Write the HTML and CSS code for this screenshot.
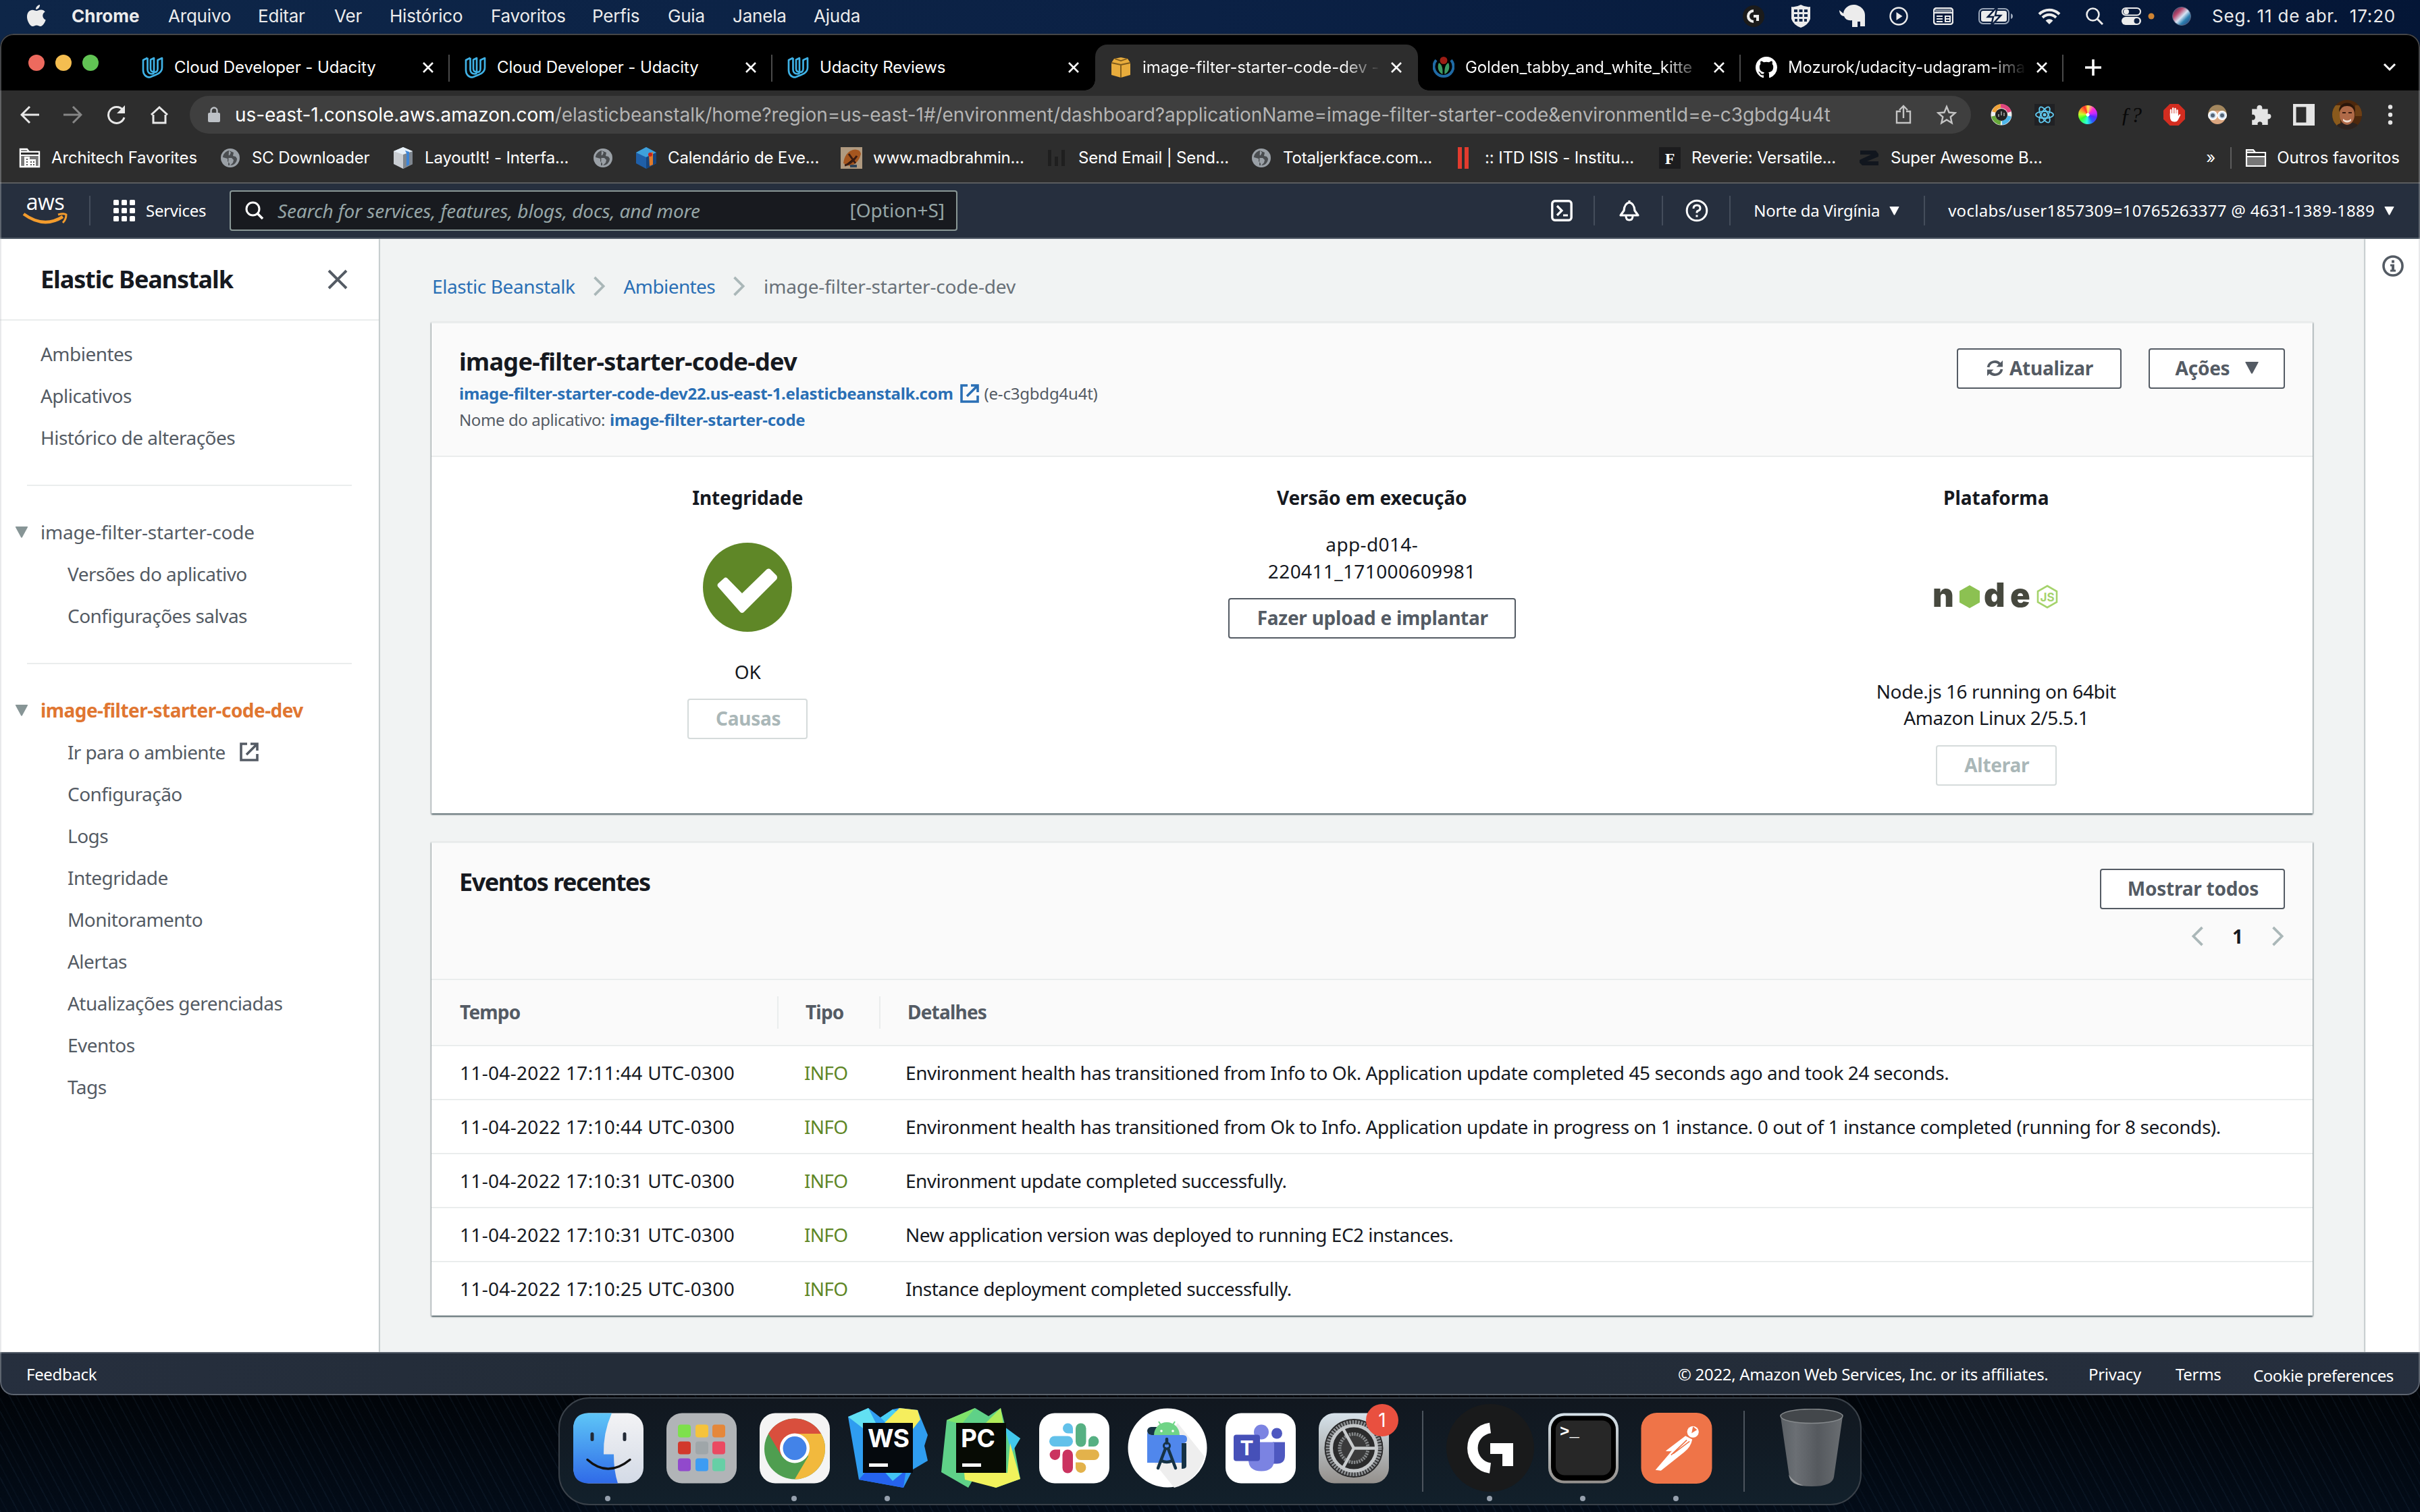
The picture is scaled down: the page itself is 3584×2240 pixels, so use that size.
FILE: index.html
```html
<!DOCTYPE html>
<html lang="pt-BR">
<head>
<meta charset="utf-8">
<title>image-filter-starter-code-dev - Elastic Beanstalk</title>
<link rel="stylesheet" href="styles.css">
</head>
<body>
<svg class="defs" width="0" height="0">
  <symbol id="close" viewBox="0 0 20 20"><path d="M3 3l14 14M17 3L3 17" stroke="currentColor" stroke-width="2.6" fill="none"/></symbol>
  <symbol id="udacity" viewBox="0 0 32 32"><path d="M8.500 1.800L2 5v15c0 6 4 10.500 9.500 10.500C19 27 30 25.500 30 16V2l-6.500 3v13c0 4-2.500 5.500-5.500 4.500M8.500 1.800V19c0 4 2.500 6.500 6.500 6.500 2 0 3-1 3-3V2l-5 2.500V18c0 3 2 4.600 5 4.500" fill="none" stroke="#3fb1e5" stroke-width="2.700" stroke-linejoin="round"/></symbol>
  <symbol id="globe" viewBox="0 0 28 28"><circle cx="14" cy="14" r="14" fill="#9aa0a6"/><path d="M12 3c-5 1-9 6-9 10l7 2v4l3 3v3c-1 0-2 0-2-.2M12 3l3 3-2 4-4 1v3h7l3 3-1 4-4 4c6 0 10-5 10-10l-2-3-4-1 1-5" fill="#4a4d50"/></symbol>
  <symbol id="folder" viewBox="0 0 32 28"><path d="M2 26V2h10l3 4h15v20z" fill="#777" stroke="#fff" stroke-width="2.200"/><path d="M2 6h28v6H2z" fill="#2d2d2d" stroke="#fff" stroke-width="2"/></symbol>
  <symbol id="external" viewBox="0 0 30 30"><path d="M12 3H3v24h24v-9M17 3h10v10M26 4L11 19" fill="none" stroke="currentColor" stroke-width="3.600"/></symbol>
  <symbol id="tri" viewBox="0 0 20 18"><path d="M1 0h18q1 0 .6 1L11 17q-1 1.300-2 0L.4 1Q0 0 1 0z" fill="currentColor"/></symbol>
  <symbol id="chev" viewBox="0 0 20 32"><path d="M2 2l14 14L2 30" fill="none" stroke="#aab7b8" stroke-width="4"/></symbol>
</svg>

<header class="menubar">
  <nav class="menus">
    <svg width="28" height="34" viewBox="0 0 28 34"><path d="M19 0c.3 4-3 7-6 7 0-4 3-6.500 6-7zM14 9c2 0 4-1.700 7-1.500 2.500.1 4.500 1.200 5.700 3-5 3-4.300 9.800 1 12-1.300 4-4.500 9.500-7.700 9.500-2.300 0-3-1.400-5.800-1.400S10.800 32 8.500 32C4.500 32 0 24 0 18 0 11 4 7.700 8 7.700c2.500 0 4.500 1.300 6 1.300z" fill="#ececec"/></svg>
    <b>Chrome</b><span>Arquivo</span><span>Editar</span><span>Ver</span><span>Histórico</span><span>Favoritos</span><span>Perfis</span><span>Guia</span><span>Janela</span><span>Ajuda</span>
  </nav>
  <div class="status">
    <svg viewBox="0 0 32 32" width="32" height="32"><circle cx="16" cy="16" r="16" fill="#1b1b1b"/><path d="M16 8a8 8 0 1 0 0 16M16 16h6v7" fill="none" stroke="#eee" stroke-width="4"/></svg>
    <svg viewBox="0 0 30 34" width="30" height="34"><path d="M1 3q7 1 14-3 7 4 14 3v18q-3 9-14 13Q4 30 1 21z" fill="#ececec"/><path d="M5 7h5v4H5zM12.500 7h5v4h-5zM20 7h5v4h-5zM5 14h5v4H5zM12.500 14h5v4h-5zM20 14h5v4h-5zM6 21h4v4H6zM12.500 21h5v4h-5zM20 21h4v4h-4z" fill="#14284a"/></svg>
    <svg viewBox="0 0 40 34" width="40" height="34"><path d="M1 8l6 5c1-9 9-13 15-13 10 0 18 8 17 17v15h-7v-7h-4v8h-8V23c-6 1-10-1-12-6-4 0-7-4-7-9z" fill="#ececec"/></svg>
    <svg viewBox="0 0 28 28" width="28" height="28"><circle cx="14" cy="14" r="12.500" fill="none" stroke="#ececec" stroke-width="2.400"/><path d="M10.500 8l9 6-9 6z" fill="#ececec"/></svg>
    <svg viewBox="0 0 30 26" width="30" height="26"><rect x="1" y="1" width="28" height="24" rx="4" fill="none" stroke="#ececec" stroke-width="2.400"/><path d="M1 8h28M5 13h9M5 17h9M5 21h9M18 13h7v8h-7zM18 17h7" stroke="#ececec" stroke-width="2" fill="none"/><path d="M3 3h24v4H3z" fill="#ececec" opacity=".5"/></svg>
    <svg viewBox="0 0 52 24" width="52" height="24"><rect x="1" y="1" width="44" height="22" rx="6" fill="none" stroke="#9aa6b8" stroke-width="2"/><rect x="4" y="4" width="38" height="16" rx="3" fill="#ececec"/><path d="M28-2L14 13h8l-3 13 14-15h-8z" fill="#ececec" stroke="#0a1d3f" stroke-width="2.500"/><path d="M48 8v8q3-1 3-4t-3-4z" fill="#9aa6b8"/></svg>
    <svg viewBox="0 0 34 24" width="34" height="24"><path d="M2 9a21 21 0 0 1 30 0M7 14a14 14 0 0 1 20 0" fill="none" stroke="#ececec" stroke-width="4"/><path d="M11.500 18.500a8 8 0 0 1 11 0L17 24z" fill="#ececec"/></svg>
    <svg viewBox="0 0 26 26" width="26" height="26"><circle cx="10.500" cy="10.500" r="9" fill="none" stroke="#ececec" stroke-width="2.600"/><path d="M17 17l8 8" stroke="#ececec" stroke-width="3"/></svg>
    <svg viewBox="0 0 52 26" width="52" height="26"><rect x="1" y="1" width="27" height="10.500" rx="5.200" fill="none" stroke="#ececec" stroke-width="2"/><circle cx="7" cy="6.300" r="4" fill="#ececec"/><rect y="14" width="29" height="12" rx="6" fill="#ececec"/><circle cx="22.500" cy="20" r="4" fill="#0a1d3f"/><circle cx="44" cy="13" r="4.500" fill="#cf8433"/></svg>
    <svg viewBox="0 0 30 30" width="30" height="30"><defs><linearGradient id="siri" x1="0" y1="0" x2="1" y2="1"><stop offset="0" stop-color="#1c2b50"/><stop offset=".3" stop-color="#b9476c"/><stop offset=".52" stop-color="#d5e4f5"/><stop offset=".7" stop-color="#2c7fb0"/><stop offset="1" stop-color="#2a2c6c"/></linearGradient></defs><circle cx="15" cy="15" r="13.500" fill="url(#siri)" stroke="#5b6a86"/></svg>
    <span class="clock">Seg. 11 de abr.&nbsp; 17:20</span>
  </div>
</header>

<section class="window">
  <div class="tabstrip">
    <div class="lights"><i class="red"></i><i class="yellow"></i><i class="green"></i></div>
    <div class="tab"><svg width="32" height="32"><use href="#udacity"/></svg><span>Cloud Developer - Udacity</span><svg class="x"><use href="#close"/></svg></div>
    <div class="tab"><svg width="32" height="32"><use href="#udacity"/></svg><span>Cloud Developer - Udacity</span><svg class="x"><use href="#close"/></svg></div>
    <div class="tab plain"><svg width="32" height="32"><use href="#udacity"/></svg><span>Udacity Reviews</span><svg class="x"><use href="#close"/></svg></div>
    <div class="tab active"><svg width="32" height="32" viewBox="0 0 32 32"><path d="M2 9l4-6 10-2 10 2 4 6v18l-14 4L2 27z" fill="#e8ac3c"/><path d="M2 9l14 3 14-3M16 12v19M7 3l9 3 9-3" stroke="#7d5a1c" stroke-width="1.800" fill="none"/></svg><span class="fade">image-filter-starter-code-dev -</span><svg class="x"><use href="#close"/></svg></div>
    <div class="tab"><svg width="32" height="32" viewBox="0 0 32 32"><path d="M5 5a14.500 14.500 0 1 0 22 0" fill="none" stroke="#1f6aa5" stroke-width="4"/><circle cx="16" cy="5.500" r="5.500" fill="#9c1c14"/><path d="M14.500 26C8 23 6 15 9 9c5 3 6 9 5.500 17zM17.500 26c6.500-3 8.500-11 5.500-17-5 3-6 9-5.500 17z" fill="#3c9a63"/></svg><span class="fade">Golden_tabby_and_white_kitte</span><svg class="x"><use href="#close"/></svg></div>
    <div class="tab"><svg width="32" height="32" viewBox="0 0 16 16"><path fill="#fff" d="M8 0C3.580 0 0 3.580 0 8c0 3.540 2.290 6.530 5.470 7.590.4.070.55-.17.55-.38 0-.19-.01-.82-.01-1.490-2.010.37-2.530-.49-2.690-.94-.09-.23-.48-.94-.82-1.130-.28-.15-.68-.52-.01-.53.63-.01 1.080.58 1.230.82.72 1.210 1.870.87 2.330.66.07-.52.28-.87.51-1.070-1.780-.2-3.640-.89-3.640-3.950 0-.87.31-1.590.82-2.150-.08-.2-.36-1.020.08-2.120 0 0 .67-.21 2.200.82.64-.18 1.320-.27 2-.27s1.360.09 2 .27c1.530-1.040 2.200-.82 2.200-.82.44 1.100.16 1.920.08 2.120.51.56.82 1.270.82 2.150 0 3.070-1.870 3.750-3.650 3.950.29.25.54.73.54 1.480 0 1.070-.01 1.930-.01 2.200 0 .21.15.46.55.38A8.010 8.010 0 0 0 16 8c0-4.420-3.580-8-8-8z"/></svg><span class="fade">Mozurok/udacity-udagram-ima</span><svg class="x"><use href="#close"/></svg></div>
    <svg class="newtab" width="26" height="26" viewBox="0 0 26 26"><path d="M13 1v24M1 13h24" stroke="#fff" stroke-width="3.600"/></svg>
    <svg class="tabmenu" width="20" height="14" viewBox="0 0 20 14"><path d="M2 2l8 8 8-8" stroke="#fff" stroke-width="3" fill="none"/></svg>
  </div>

  <div class="toolbar">
    <div class="navicons">
      <svg viewBox="0 0 28 28"><path d="M28 14H3M14 2L2 14l12 12" stroke="#e8e8e8" stroke-width="3" fill="none"/></svg>
      <svg viewBox="0 0 28 28"><path d="M0 14h25M14 2l12 12-12 12" stroke="#868686" stroke-width="3" fill="none"/></svg>
      <svg viewBox="0 0 28 28"><path d="M24 7A12 12 0 1 0 26 18" stroke="#e8e8e8" stroke-width="3" fill="none"/><path d="M27 0v12H15z" fill="#e8e8e8"/></svg>
      <svg viewBox="0 0 28 28"><path d="M5 14v12h18V14M2 14L14 3l12 11" stroke="#e8e8e8" stroke-width="3" fill="none"/></svg>
    </div>
    <div class="omnibox">
      <svg width="18" height="24" viewBox="0 0 18 24"><rect y="9" width="18" height="14" rx="2" fill="#bdc1c6"/><path d="M4.500 10V6a4.500 4.500 0 0 1 9 0v4" fill="none" stroke="#bdc1c6" stroke-width="2.400"/></svg>
      <span class="url"><b>us-east-1.console.aws.amazon.com</b>/elasticbeanstalk/home?region=us-east-1#/environment/dashboard?applicationName=image-filter-starter-code&amp;environmentId=e-c3gbdg4u4t</span>
      <svg class="share" width="24" height="30" viewBox="0 0 24 30"><path d="M8 10H2v17h20V10h-6M12 20V3M6 8l6-6 6 6" stroke="#c4c4c4" stroke-width="2.400" fill="none"/></svg>
      <svg class="star" width="30" height="30" viewBox="0 0 30 30"><path d="M15 3l3.500 8.500 9 .8-6.800 6 2 9L15 22.500l-7.700 4.800 2-9-6.800-6 9-.8z" stroke="#c4c4c4" stroke-width="2.400" fill="none"/></svg>
    </div>
    <div class="exts">
      <svg viewBox="0 0 32 32"><circle cx="16" cy="16" r="12" fill="none" stroke="#eee" stroke-width="7"/><path d="M5 12A12 12 0 0 1 15 3" stroke="#f0a33a" stroke-width="6" fill="none"/><path d="M15 3a13 13 0 0 1 13 9" stroke="#e0457d" stroke-width="6" fill="none"/><path d="M28 18a13 13 0 0 1-11 10" stroke="#4db6ea" stroke-width="6" fill="none"/><path d="M15 28A13 13 0 0 1 4 18" stroke="#67a83a" stroke-width="6" fill="none"/><circle cx="16" cy="16" r="9" fill="#222"/><path d="M16 11v6M12 15v4M20 13v5" stroke="#eee"/></svg>
      <svg viewBox="0 0 32 32"><path d="M1 0h30v32H1z" fill="#202124"/><g fill="none" stroke="#61c9ef" stroke-width="1.800"><ellipse cx="16" cy="16" rx="13" ry="5"/><ellipse cx="16" cy="16" rx="13" ry="5" transform="rotate(60 16 16)"/><ellipse cx="16" cy="16" rx="13" ry="5" transform="rotate(120 16 16)"/></g><circle cx="16" cy="16" r="2.500" fill="#61c9ef"/></svg>
      <i class="wheel"></i>
      <span class="fq">ƒ?</span>
      <svg viewBox="0 0 32 32"><path d="M9.500 0h13L32 9.500v13L22.500 32h-13L0 22.500v-13z" fill="#d32d20"/><path d="M11 17V9M14.200 16V6.500M17.500 16V7M20.500 17V9.500" stroke="#fff" stroke-width="2.400" stroke-linecap="round"/><path d="M9.800 14h12v4l2.200-3 1.500 1-3.500 7q-1.500 3.500-5.500 3.500-6.700 0-6.700-7.500z" fill="#fff"/></svg>
      <svg viewBox="0 0 32 32"><ellipse cx="16" cy="16" rx="13" ry="14" fill="#dba67f"/><path d="M2 17C2-4 30-4 30 17l-7-7H9z" fill="#a3875e"/><circle cx="9" cy="17" r="6" fill="#cde" stroke="#fff" stroke-width="2"/><circle cx="23" cy="17" r="6" fill="#cde" stroke="#fff" stroke-width="2"/><circle cx="9" cy="17" r="3" fill="#567"/><circle cx="23" cy="17" r="3" fill="#567"/></svg>
      <svg viewBox="0 0 30 30"><path d="M3 7h7c-2-7 9-7 7 0h8v7c6-2 6 8 0 7v8h-8c2-6-8-6-6 0H3v-7c6 2 6-9 0-7z" fill="#e4e4e4"/></svg>
      <svg viewBox="0 0 28 28"><path d="M2 2h24v24H2z" fill="none" stroke="#e4e4e4" stroke-width="4"/><path d="M17 2h9v24h-9z" fill="#e4e4e4"/></svg>
      <svg class="avatar" viewBox="0 0 44 44"><defs><clipPath id="av"><circle cx="22" cy="22" r="22"/></clipPath></defs><g clip-path="url(#av)"><path d="M0 0h44v44H0z" fill="#4d280d"/><path d="M0 8h12v30H0z" fill="#8a5a1c"/><path d="M34 8h10v16H34z" fill="#6e4016"/><path d="M4 44q2-12 18-10 16-3 20 10z" fill="#2c2320"/><ellipse cx="22" cy="22" rx="11" ry="15" fill="#b06a48"/><path d="M10 18C9 0 35 0 34 18q-3-9-12-9t-12 9z" fill="#2a160b"/><path d="M16 28q6 5 12 0v3q-6 5-12 0z" fill="#f1ddd0"/><path d="M15 19h5M24 19h5" stroke="#3a1c10" stroke-width="2"/></g></svg>
      <svg viewBox="0 0 28 28"><circle cx="14" cy="4" r="2.800" fill="#e4e4e4"/><circle cx="14" cy="14" r="2.800" fill="#e4e4e4"/><circle cx="14" cy="24" r="2.800" fill="#e4e4e4"/></svg>
    </div>
  </div>

  <div class="bookmarks">
    <div class="bm"><svg viewBox="0 0 32 32"><path d="M2 29V3h10l3 4h15v22z" fill="#777" stroke="#fff" stroke-width="2.400"/><path d="M2 7h28v5H2z" fill="#2d2d2d" stroke="#fff" stroke-width="2"/><path d="M8 14h8v4h9v11H8z" fill="#fff"/><path d="M11 18h2M11 22h2M11 26h2M17 22h2M21 22h2M17 26h2M21 26h2" stroke="#555" stroke-width="2"/></svg><span>Architech Favorites</span></div>
    <div class="bm"><svg viewBox="-2 -2 32 32"><use href="#globe" width="28" height="28"/></svg><span>SC Downloader</span></div>
    <div class="bm"><svg viewBox="0 0 32 32"><path d="M2 6l14-6 14 6v19l-14 7L2 25z" fill="#c9cdd2"/><path d="M16 10l14-4v19l-14 7z" fill="#7e868f"/><path d="M2 6l14-6 14 6-14 5z" fill="#e7f0f8"/><path d="M19 5l6 2v19l-4 2V9z" fill="#3d85d6"/></svg><span>LayoutIt! - Interfa...</span></div>
    <div class="bm"><svg viewBox="-2 -2 32 32"><use href="#globe" width="28" height="28"/></svg></div>
    <div class="bm"><svg viewBox="0 0 32 32"><path d="M1 8L16 0l15 8v16l-15 8L1 24z" fill="#1f5fa8"/><path d="M1 8l15 7 15-7L16 0z" fill="#3fa0da"/><path d="M16 15l15-7v16l-15 8z" fill="#17457e"/><path d="M20 10l6-3v19l-5 2z" fill="#e07b2a"/><circle cx="22" cy="11" r="3" fill="#c8231c"/></svg><span>Calendário de Eve...</span></div>
    <div class="bm"><svg viewBox="0 0 32 32"><path d="M0 0h32v32H0z" fill="#b09a80"/><path d="M4 24Q6 8 18 4q10-2 12 6-3 14-16 18z" fill="#a5561f"/><path d="M6 27q10-2 18-14M12 10l10 14" stroke="#3a1c12" stroke-width="3"/><path d="M14 26h10v4H14z" fill="#2d4358"/></svg><span>www.madbrahmin...</span></div>
    <div class="bm"><svg viewBox="0 0 32 32"><path d="M3 4h5v24H3zM13 14h5v14h-5zM23 4h5v24h-5z" fill="#1f1f1f"/></svg><span>Send Email | Send...</span></div>
    <div class="bm"><svg viewBox="-2 -2 32 32"><use href="#globe" width="28" height="28"/></svg><span>Totaljerkface.com...</span></div>
    <div class="bm"><svg viewBox="0 0 32 32"><path d="M8 0h6v32H8zM18 0h6v32h-6z" fill="#e23b2e"/></svg><span>:: ITD ISIS - Institu...</span></div>
    <div class="bm"><svg viewBox="0 0 32 32"><path d="M0 0h32v32H0z" fill="#1c1c1e"/><text x="16" y="25" text-anchor="middle" class="t-f">F</text></svg><span>Reverie: Versatile...</span></div>
    <div class="bm"><svg viewBox="0 0 32 32"><path d="M3 5h23l4 5v4l-17 7h17v6H6l-4-4v-4l17-8H3z" fill="#11161e"/></svg><span>Super Awesome B...</span></div>
    <div class="bm-end"><span class="more">»</span><i></i><svg width="32" height="28"><use href="#folder"/></svg><span>Outros favoritos</span></div>
  </div>

  <div class="awsnav">
    <svg class="awslogo" width="66" height="42" viewBox="0 0 66 42"><text x="33" y="20" text-anchor="middle" class="t-aws">aws</text><path d="M1 26q30 22 58 4" fill="none" stroke="#f39c2d" stroke-width="4.500"/><path d="M52 27q9-2.500 12 0 0 7-5 12" fill="none" stroke="#f39c2d" stroke-width="3"/></svg>
    <i class="sep s1"></i>
    <svg width="32" height="32" viewBox="0 0 32 32" fill="#fff"><rect width="8" height="8" rx="1.500"/><rect x="12" width="8" height="8" rx="1.500"/><rect x="24" width="8" height="8" rx="1.500"/><rect y="12" width="8" height="8" rx="1.500"/><rect x="12" y="12" width="8" height="8" rx="1.500"/><rect x="24" y="12" width="8" height="8" rx="1.500"/><rect y="24" width="8" height="8" rx="1.500"/><rect x="12" y="24" width="8" height="8" rx="1.500"/><rect x="24" y="24" width="8" height="8" rx="1.500"/></svg>
    <span class="services">Services</span>
    <div class="search"><svg width="28" height="28" viewBox="0 0 28 28"><circle cx="11.500" cy="11.500" r="9.500" fill="none" stroke="#fff" stroke-width="3"/><path d="M18 18l8 8" stroke="#fff" stroke-width="3.600"/></svg><em>Search for services, features, blogs, docs, and more</em><span>[Option+S]</span></div>
    <div class="awsright">
      <div class="cell c-shell"><svg width="32" height="32" viewBox="0 0 32 32"><rect x="1.800" y="1.800" width="28.400" height="28.400" rx="4" fill="none" stroke="#fff" stroke-width="3.400"/><path d="M9 9l7 7-7 7M18 23h7" stroke="#fff" stroke-width="3.200" fill="none"/></svg></div>
      <div class="cell c-bell"><svg width="34" height="34" viewBox="0 0 34 34"><path d="M17 2v3M4 24h26l-5-7q-1-11-8-12-7 1-8 12z" fill="none" stroke="#fff" stroke-width="3.200" stroke-linejoin="round"/><path d="M12 25q0 6 5 6t5-6" fill="none" stroke="#fff" stroke-width="3"/></svg></div>
      <div class="cell c-help"><svg width="34" height="34" viewBox="0 0 34 34"><circle cx="17" cy="17" r="14.800" fill="none" stroke="#fff" stroke-width="3"/><path d="M12 14q0-5 5-5t5 4.500q0 3-3.500 4-1.500.5-1.500 3M17 23.500v3" stroke="#fff" stroke-width="3" fill="none"/></svg></div>
      <div class="cell c-region"><span>Norte da Virgínia</span><svg width="15" height="13"><use href="#tri"/></svg></div>
      <div class="c-user"><span>voclabs/user1857309=10765263377 @ 4631-1389-1889</span><svg width="15" height="13"><use href="#tri"/></svg></div>
    </div>
  </div>

  <div class="content">
    <aside class="sidebar">
      <div class="side-head"><h2>Elastic Beanstalk</h2><svg width="30" height="30" viewBox="0 0 30 30"><path d="M2 2l26 26M28 2L2 28" stroke="#545b64" stroke-width="4"/></svg></div>
      <ul class="top">
        <li>Ambientes</li><li>Aplicativos</li><li>Histórico de alterações</li>
      </ul>
      <hr>
      <ul>
        <li class="group"><svg width="20" height="17"><use href="#tri"/></svg>image-filter-starter-code</li>
        <li class="sub">Versões do aplicativo</li><li class="sub">Configurações salvas</li>
      </ul>
      <hr>
      <ul>
        <li class="group current"><svg width="20" height="17"><use href="#tri"/></svg><b>image-filter-starter-code-dev</b></li>
        <li class="sub go">Ir para o ambiente<svg class="ext" width="30" height="30"><use href="#external"/></svg></li>
        <li class="sub">Configuração</li><li class="sub">Logs</li><li class="sub">Integridade</li><li class="sub">Monitoramento</li><li class="sub">Alertas</li><li class="sub">Atualizações gerenciadas</li><li class="sub">Eventos</li><li class="sub">Tags</li>
      </ul>
    </aside>

    <main>
      <nav class="crumbs"><a>Elastic Beanstalk</a><svg width="20" height="30"><use href="#chev"/></svg><a class="c2">Ambientes</a><svg width="20" height="30"><use href="#chev"/></svg><span>image-filter-starter-code-dev</span></nav>

      <section class="card">
        <header class="env-head">
          <div class="env-title">
            <h1>image-filter-starter-code-dev</h1>
            <p><a class="host">image-filter-starter-code-dev22.us-east-1.elasticbeanstalk.com</a><svg width="30" height="30"><use href="#external"/></svg><span>(e-c3gbdg4u4t)</span></p>
            <p><span class="appname">Nome do aplicativo:</span><a>image-filter-starter-code</a></p>
          </div>
          <div class="actions">
            <button class="btn refresh"><svg width="25" height="25" viewBox="0 0 25 25"><path d="M2.500 11A10 10 0 0 1 20 6.500M22.500 14A10 10 0 0 1 5 18.500" fill="none" stroke="#545b64" stroke-width="3.800"/><path d="M24 1v9.500h-9.500zM1 24v-9.500h9.500z" fill="#545b64"/></svg>Atualizar</button>
            <button class="btn acts">Ações<svg width="22" height="18"><use href="#tri"/></svg></button>
          </div>
        </header>
        <div class="overview">
          <div class="col">
            <h3>Integridade</h3>
            <svg class="ok" width="132" height="132" viewBox="0 0 132 132"><circle cx="66" cy="66" r="66" fill="#5f8727"/><path d="M22.500 65.500q-2-2.500 0-5l9-8q2-2 4.500 0L58 75l36.500-35.500q3-2 5.500 0l9 9q2 3 0 6L60.500 103q-2.500 2-5 0z" fill="#fff"/></svg>
            <p class="oktext">OK</p>
            <button class="btn off w-causas">Causas</button>
          </div>
          <div class="col">
            <h3>Versão em execução</h3>
            <p class="version">app-d014-<br>220411_171000609981</p>
            <button class="btn w-deploy">Fazer upload e implantar</button>
          </div>
          <div class="col">
            <h3 class="plat">Plataforma</h3>
            <svg class="node" width="184" height="60" viewBox="0 0 184 60"><g class="t-node"><text x="-2" y="53">n</text><text x="74" y="53">d</text><text x="113" y="53">e</text></g><path d="M53 21l15 8.500v17L53 55l-15-8.500v-17z" fill="#8cc152"/><path d="M168 22l14 8v16l-14 8-14-8V30z" fill="#fff" stroke="#a5d36c" stroke-width="2.600"/><text x="168" y="45" text-anchor="middle" class="t-js">JS</text></svg>
            <p class="platform">Node.js 16 running on 64bit<br>Amazon Linux 2/5.5.1</p>
            <button class="btn off w-alterar">Alterar</button>
          </div>
        </div>
      </section>

      <section class="card events">
        <header class="ev-head">
          <h2>Eventos recentes</h2>
          <div class="ev-tools">
            <button class="btn w-all">Mostrar todos</button>
            <div class="pager"><svg class="prev" width="20" height="30"><use href="#chev"/></svg><b>1</b><svg width="20" height="30"><use href="#chev"/></svg></div>
          </div>
        </header>
        <div class="row th"><b>Tempo</b><b>Tipo</b><b>Detalhes</b></div>
        <div class="row"><time>11-04-2022 17:11:44 UTC-0300</time><i>INFO</i><span>Environment health has transitioned from Info to Ok. Application update completed 45 seconds ago and took 24 seconds.</span></div>
        <div class="row"><time>11-04-2022 17:10:44 UTC-0300</time><i>INFO</i><span>Environment health has transitioned from Ok to Info. Application update in progress on 1 instance. 0 out of 1 instance completed (running for 8 seconds).</span></div>
        <div class="row"><time>11-04-2022 17:10:31 UTC-0300</time><i>INFO</i><span class="short">Environment update completed successfully.</span></div>
        <div class="row"><time>11-04-2022 17:10:31 UTC-0300</time><i>INFO</i><span class="short">New application version was deployed to running EC2 instances.</span></div>
        <div class="row"><time>11-04-2022 17:10:25 UTC-0300</time><i>INFO</i><span class="short">Instance deployment completed successfully.</span></div>
      </section>
    </main>

    <aside class="infobar"><svg width="32" height="32" viewBox="0 0 32 32"><circle cx="16" cy="16" r="14" fill="none" stroke="#545b64" stroke-width="3.600"/><path d="M14 7.500h4v4h-4zM12 13.500h6v8h2v3h-8v-3h2v-5h-2z" fill="#545b64"/></svg></aside>
  </div>

  <footer class="awsfoot"><span>Feedback</span><span class="copy">© 2022, Amazon Web Services, Inc. or its affiliates.</span><span class="priv">Privacy</span><span class="terms">Terms</span><span class="cookie">Cookie preferences</span></footer>
</section>

<div class="dock">
  <div class="app run"><svg width="104" height="105" viewBox="0 0 104 104"><defs><linearGradient id="fb" x1="0" y1="0" x2="0" y2="1"><stop offset="0" stop-color="#5ec6f7"/><stop offset="1" stop-color="#2f6ae8"/></linearGradient><linearGradient id="fw" x1="0" y1="0" x2="0" y2="1"><stop offset="0" stop-color="#f3f3f5"/><stop offset="1" stop-color="#d3dae6"/></linearGradient></defs><rect width="104" height="104" rx="23" fill="url(#fw)"/><path d="M57 0H23Q0 0 0 23v58q0 23 23 23h43q-6-18-6-43H45Q44 30 57 0z" fill="url(#fb)"/><path d="M28 31v8M76 31v8" stroke="#222a36" stroke-width="5" stroke-linecap="round"/><path d="M21 69q30 27 63 0" fill="none" stroke="#111" stroke-width="3.500" stroke-linecap="round"/></svg></div>
  <div class="app"><svg width="104" height="105" viewBox="0 0 104 104"><rect width="104" height="104" rx="23" fill="#b1b4b7"/><g><rect x="17" y="17" width="19" height="19" rx="4" fill="#7ee04c"/><rect x="43" y="17" width="19" height="19" rx="4" fill="#f5c33c"/><rect x="68" y="17" width="19" height="19" rx="4" fill="#e5873a"/><rect x="17" y="42" width="19" height="19" rx="4" fill="#d2382b"/><rect x="43" y="42" width="19" height="19" rx="4" fill="#9fa6a9"/><rect x="68" y="42" width="19" height="19" rx="4" fill="#ea4a62"/><rect x="17" y="67" width="19" height="19" rx="4" fill="#9149cc"/><rect x="43" y="67" width="19" height="19" rx="4" fill="#3d9cf3"/><rect x="68" y="67" width="19" height="19" rx="4" fill="#66cfa6"/></g></svg></div>
  <div class="app run"><svg width="104" height="105" viewBox="0 0 104 104"><rect width="104" height="104" rx="23" fill="#f4f4f4"/><circle cx="52" cy="53" r="45" fill="#4f9e50"/><path d="M52 8a45 45 0 0 1 39 22.500H52L33 64 13 30.500A45 45 0 0 1 52 8z" fill="#d94f3d"/><path d="M91 30.500A45 45 0 0 1 52 98l20-34-20-33.500z" fill="#f2b93d"/><circle cx="52" cy="52" r="22" fill="#fff"/><circle cx="52" cy="52" r="17.500" fill="#4383e8"/></svg></div>
  <div class="app run"><svg width="118" height="118" viewBox="0 0 118 118"><path d="M0 13L30 0l18 14L66 2l10-2 27 3 15 37-5 16 5 22-22 13-14 27-66-12z" fill="#2f9df0"/><path d="M0 13L30 0l12 24-20 6z" fill="#62e0f2"/><path d="M48 14L66 2l8 4-16 18z" fill="#4bd0f4"/><path d="M54 22L76 0l27 3 4 14-11 14-10-9z" fill="#f6ee5d"/><path d="M16 106l66 12 4-28H30z" fill="#2563ee"/><path d="M50 90l16 18 22-18z" fill="#42c4f5"/><rect x="22" y="22" width="74" height="74" fill="#05090d"/><text x="29" y="58" class="t-ide">WS</text><path d="M31 82h28v5H31z" fill="#fff"/></svg></div>
  <div class="app"><svg width="118" height="118" viewBox="0 0 118 118"><path d="M8 18L50 0l20 12L88 0l8 32 21 13-9 12 9 48-36 13-34-12-7 12-40-23z" fill="#5fd188"/><path d="M64 24L88 0l4 26z" fill="#b0ec5a"/><path d="M8 18l42-18-20 24z" fill="#7fe36a"/><path d="M94 28l23 17-13 22z" fill="#41c8ec"/><path d="M34 96h64l4-44 15 53-36 13-46-12z" fill="#f1f25c"/><rect x="22" y="22" width="74" height="74" fill="#070b04"/><text x="29" y="58" class="t-ide">PC</text><path d="M31 82h28v5H31z" fill="#fff"/></svg></div>
  <div class="app"><svg width="104" height="105" viewBox="0 0 104 104"><rect width="104" height="104" rx="23" fill="#fff"/><g fill="#62c1ea"><path d="M42.500 15a7.500 7.500 0 0 1 7.500 7.500V30h-7.500a7.500 7.500 0 0 1 0-15z"/><rect x="15" y="34" width="35" height="15.500" rx="7.700"/></g><g fill="#56b083"><rect x="54" y="15" width="15.500" height="35" rx="7.700"/><path d="M73 49.500V42a7.700 7.700 0 1 1 7.700 7.500z"/></g><g fill="#cb3360"><path d="M31 54v7.500A7.700 7.700 0 1 1 23 54z"/><rect x="34.500" y="54" width="15.500" height="35" rx="7.700"/></g><g fill="#e3b24b"><rect x="54" y="54" width="35" height="15.500" rx="7.700"/><path d="M54 73h7.500a7.700 7.700 0 1 1-7.500 8z"/></g></svg></div>
  <div class="app"><svg width="118" height="118" viewBox="0 0 118 118"><circle cx="59" cy="59" r="58.500" fill="#fff"/><path d="M74 22l40 50q-12 38-45 46L40 82z" fill="#eee"/><rect x="29" y="28" width="20" height="12" rx="6" fill="#163245"/><path d="M39 40a19 19 0 0 1 38 0z" fill="#70d487"/><path d="M46 20l5 8M70 20l-5 8" stroke="#70d487" stroke-width="2"/><circle cx="50" cy="34" r="1.800" fill="#fff"/><circle cx="67" cy="34" r="1.800" fill="#fff"/><path d="M29 34q0 6 8 6h45q6 0 6 6t-6 6v29H29z" fill="#5087ec"/><path d="M80 52h7v34q0 4-7 4z" fill="#163245"/><circle cx="58" cy="56" r="4.500" fill="none" stroke="#163245" stroke-width="3"/><path d="M58 46v6M56 60L45 89M60 60l11 29M50 78q8 4 16 0" fill="none" stroke="#163245" stroke-width="4.500" stroke-linecap="round"/></svg></div>
  <div class="app"><svg width="104" height="105" viewBox="0 0 104 104"><rect width="104" height="104" rx="23" fill="#fff"/><circle cx="76" cy="30" r="8" fill="#4e58c0"/><path d="M70 43h18v20q0 12-12 12h-6z" fill="#4e58c0"/><circle cx="53" cy="28" r="11" fill="#7b83e2"/><path d="M34 43h38v26q0 17-19 17T34 69z" fill="#7b83e2"/><rect x="12" y="32" width="39" height="39" rx="4" fill="#4650b8"/><text x="31.500" y="62" text-anchor="middle" class="t-teams">T</text></svg></div>
  <div class="app"><svg width="104" height="105" viewBox="0 0 104 104"><defs><linearGradient id="sg" x1="0" y1="0" x2="0" y2="1"><stop offset="0" stop-color="#d6e2ea"/><stop offset="1" stop-color="#94908c"/></linearGradient></defs><rect width="104" height="104" rx="23" fill="url(#sg)"/><circle cx="52" cy="52" r="43.500" fill="#2b2b2c"/><circle cx="52" cy="52" r="38" fill="none" stroke="#8e9194" stroke-width="7" stroke-dasharray="2.600 1.600"/><circle cx="52" cy="52" r="33.500" fill="none" stroke="#c3c6c8" stroke-width="5"/><circle cx="52" cy="52" r="21" fill="#3a3a3b" stroke="#85888a" stroke-width="5" stroke-dasharray="2.400 1.400"/><path d="M52 52h33M52 52L36 23M52 52L36 81" stroke="#c8cbcd" stroke-width="4.500"/></svg><span class="badge">1</span></div>
  <i class="dsep"></i>
  <div class="app run"><svg width="130" height="130" viewBox="0 0 130 130"><circle cx="65" cy="65" r="65" fill="#191a1b"/><path d="M65 35.500a30 30 0 0 0 0 59.500" fill="none" stroke="#fff" stroke-width="15.500"/><path d="M65 58h34v34H83V74H65z" fill="#fff"/></svg></div>
  <div class="app run"><svg width="104" height="105" viewBox="0 0 104 104"><rect width="104" height="104" rx="23" fill="url(#sg)"/><rect x="4" y="4" width="96" height="96" rx="20" fill="#000"/><rect x="11" y="11" width="82" height="81" rx="13" fill="#272727"/><text x="17" y="34" class="t-term">&gt;_</text></svg></div>
  <div class="app run"><svg width="106" height="105" viewBox="0 0 104 104"><rect width="104" height="104" rx="23" fill="#ef7448"/><circle cx="76" cy="28" r="8.500" fill="#fff"/><path d="M76 20l6 5-8 5z" fill="#ef7448"/><path d="M65 34l10 5q-2 11-12 19L29 85l-8-1 24-28q-4 1-9 0z" fill="#fff"/><path d="M67 40L44 62M71 42L47 60" stroke="#ef7448" stroke-width="1.600"/></svg></div>
  <i class="dsep"></i>
  <div class="app"><svg width="94" height="116" viewBox="0 0 94 116"><defs><linearGradient id="tg" x1="0" y1="0" x2="1" y2="0"><stop offset="0" stop-color="#5b6065"/><stop offset=".25" stop-color="#6b6f74"/><stop offset=".6" stop-color="#55595e"/><stop offset="1" stop-color="#6a6e72"/></linearGradient></defs><path d="M1 11l13 90q2 14 33 14t33-14l13-90z" fill="url(#tg)"/><ellipse cx="47" cy="11" rx="46" ry="10.500" fill="#43474b" stroke="#85898c" stroke-width="1.500"/><path d="M13 98q4 15 22 16-14-5-22-16z" fill="#96999b"/></svg></div>
</div>
</body>
</html>
```
FILE: styles.css
```css
* { box-sizing: border-box; }
html, body { margin: 0; height: 100%; }
body {
  width: 3584px; height: 2240px; overflow: hidden;
  display: flex; flex-direction: column;
  background:
    linear-gradient(90deg, #0e2648 0, #0b2145 50%, #041636 100%) 0 0 / 100% 200px no-repeat,
    repeating-linear-gradient(62deg, rgba(70,110,150,.09) 0 2px, transparent 2px 9px, rgba(70,110,150,.05) 9px 11px, transparent 11px 23px),
    linear-gradient(transparent 2060px, #030c18 2240px),
    #010408;
  font-family: "Noto Sans", "Open Sans", sans-serif; font-size: 28px; color: #16191f;
}
h1, h2, h3, p, ul { margin: 0; padding: 0; }
svg { display: block; flex: none; }
.defs { position: absolute; }
i { font-style: normal; }

/* macOS menu bar */
.menubar { height: 50px; flex: none; display: flex; justify-content: space-between; align-items: center; color: #ececec; font: 400 26px/46px "Inter", sans-serif; letter-spacing: -.2px; padding-bottom: 3px; }
.menus { display: grid; grid-template-columns: 66px 143px 133px 113px 82px 150px 150px 112px 96px 120px 100px; padding-left: 40px; align-items: center; }
.menus b { letter-spacing: 0; }
.status { display: flex; align-items: center; padding-right: 38px; }
.status svg:nth-child(1) { margin-right: 39px; }
.status svg:nth-child(2) { margin-right: 41px; }
.status svg:nth-child(3) { margin-right: 35px; }
.status svg:nth-child(4) { margin-right: 37px; }
.status svg:nth-child(5) { margin-right: 37px; }
.status svg:nth-child(6) { margin-right: 36px; }
.status svg:nth-child(7) { margin-right: 37px; }
.status svg:nth-child(8) { margin-right: 27px; }
.status svg:nth-child(9) { margin-right: 22px; }
.status svg:nth-child(10) { margin-right: 30px; }
.clock { width: 270px; white-space: nowrap; letter-spacing: .8px; }

/* browser window */
.window { height: 2017px; flex: none; display: flex; flex-direction: column; border-radius: 20px; overflow: hidden; position: relative; background: #000; }
.window::after { content: ""; position: absolute; inset: 0; border: 2px solid rgba(190,195,200,.36); border-radius: 20px; pointer-events: none; }
.tabstrip { height: 84px; flex: none; display: flex; align-items: flex-end; color: #fff; font: 24px/32px "Inter", sans-serif; }
.lights { width: 188px; height: 68px; padding-left: 42px; display: flex; gap: 16px; align-items: center; padding-bottom: 14px; }
.lights i { width: 24px; height: 24px; border-radius: 50%; }
.red { background: #ed6a5e; } .yellow { background: #f4bd50; } .green { background: #61c454; }
.tab { width: 478px; height: 68px; display: flex; align-items: center; padding: 0 0 0 22px; position: relative; }
.tab span { margin-left: 16px; width: 352px; white-space: nowrap; letter-spacing: -.1px; }
.tab .x { width: 20px; height: 20px; margin-left: 14px; }
.tab::after { content: ""; position: absolute; right: 0; top: 15px; width: 2px; height: 40px; background: #4a4a4a; }
.tab.plain::after, .tab.active::after { display: none; }
.tab.active { background: #2d2d2d; border-radius: 18px 18px 0 0; }
.tab.active::before { content: ""; position: absolute; left: -16px; right: -16px; bottom: 0; height: 16px; background: radial-gradient(circle at 0 0, transparent 15.5px, #2d2d2d 16px) left / 16px 16px no-repeat, radial-gradient(circle at 100% 0, transparent 15.5px, #2d2d2d 16px) right / 16px 16px no-repeat; }
.tab .fade { background: linear-gradient(90deg, #fff 84%, rgba(255,255,255,.08) 99%); -webkit-background-clip: text; background-clip: text; color: transparent; }
.newtab { margin: 0 0 21px 31px; }
.tabmenu { margin: 0 0 27px 416px; }

.toolbar { height: 72px; flex: none; background: #2d2d2d; display: flex; align-items: center; }
.navicons { width: 281px; padding-left: 30px; display: flex; gap: 36px; }
.navicons svg { width: 28px; height: 28px; }
.omnibox { width: 2638px; height: 56px; border-radius: 28px; background: #3f3f3f; display: flex; align-items: center; padding-left: 27px; font: 28px/40px "Inter", sans-serif; color: #b4b4b4; }
.url { margin-left: 22px; letter-spacing: -.06px; width: 2459px; white-space: nowrap; }
.url b { font-weight: 400; color: #fff; }
.star { margin-left: 37px; }
.exts { display: flex; margin-left: 13px; }
.exts > * { width: 32px; height: 32px; margin: 0 16px; }
.exts .avatar { width: 44px; height: 44px; margin: -6px 10px; }
.exts .wheel { width: 28px; height: 28px; margin: 2px 18px; border-radius: 50%; background: radial-gradient(circle, #fff 0 12%, transparent 14%), conic-gradient(#fff04a, #ff2bd4 12%, #c02bff 22%, #5a2bff 30%, #2b5bff 40%, #2bffe0 52%, #38ff2b 66%, #c8ff2b 76%, #ff8c2a 86%, #ff2b2b 94%, #fff04a); }
.fq { font: italic 32px/32px "Liberation Serif", serif; color: #080808; white-space: nowrap; }

.bookmarks { height: 64px; flex: none; background: #2d2d2d; padding-left: 28px; display: grid; grid-template-columns: 297px 256px 296px 64px 304px 304px 303px 299px 306px 295px 500px 1fr; color: #fff; font: 24px/32px "Inter", sans-serif; letter-spacing: -.15px; align-items: center; }
.bookmarks > * { margin-top: -8px; }
.bm { display: flex; align-items: center; gap: 16px; white-space: nowrap; }
.bm svg { width: 32px; height: 32px; }
.bm-end { display: flex; align-items: center; white-space: nowrap; justify-content: flex-end; padding-right: 30px; letter-spacing: 0; }
.bm-end i { width: 2px; height: 32px; background: #5c5c5c; margin: 0 20px 0 22px; }
.bm-end svg { margin-right: 15px; }
.t-f { font: 700 24px "Liberation Serif", serif; fill: #fff; }

/* console top navigation */
.awsnav { height: 84px; flex: none; background: #262f3e; border-top: 2px solid #5a5c5e; border-bottom: 2px solid #555e6a; display: flex; align-items: center; padding-left: 34px; color: #fff; font-size: 24px; }
.awsnav span { position: relative; top: -1px; }
.awslogo { overflow: visible; }
.t-aws { font: 500 32px "Open Sans", sans-serif; fill: #fff; letter-spacing: -.5px; }
.sep { width: 2px; height: 44px; background: #444d5b; }
.s1 { margin: 0 34px 0 32px; }
.services { margin-left: 16px; width: 124px; letter-spacing: -.3px; }
.search { width: 1078px; height: 60px; border: 2px solid #8a9896; border-radius: 4px; background: #181a1f; display: flex; align-items: center; padding: 0 17px 0 21px; font-size: 28px; color: #95a5a6; }
.search em { margin-left: 20px; letter-spacing: -.15px; flex: 1; }
.awsright { margin-left: auto; height: 44px; display: flex; align-items: center; padding-right: 38px; }
.cell { height: 44px; border-right: 2px solid #444d5b; display: flex; align-items: center; }
.c-shell { width: 65px; } .c-bell { width: 101px; padding-left: 34px; } .c-help { width: 100px; padding-left: 33px; }
.c-region { width: 288px; padding-left: 34px; gap: 14px; letter-spacing: -.25px; }
.c-user { padding-left: 34px; display: flex; align-items: center; gap: 14px; letter-spacing: .29px; white-space: nowrap; }

/* console body */
.content { flex: 1; min-height: 0; display: flex; background: #f1f3f3; }
.sidebar { width: 561px; flex: none; background: #fff; box-shadow: 1px 0 2px rgba(0,28,36,.35); color: #545b64; letter-spacing: -.53px; }
.side-head { height: 121px; border-bottom: 2px solid #eaeded; display: flex; justify-content: space-between; align-items: center; padding: 0 46px 0 60px; }
.side-head h2 { font-size: 36px; letter-spacing: -1.1px; color: #16191f; }
ul { list-style: none; }
.top { padding-top: 19px; }
li { height: 62px; padding: 0 0 2px 60px; display: flex; align-items: center; white-space: nowrap; }
li.sub { padding-left: 100px; }
.group { padding-left: 22px; letter-spacing: -.22px; }
.group svg { margin-right: 18px; color: #879596; }
.current b { color: #e07631; letter-spacing: -.55px; }
.go { letter-spacing: -.62px; }
.ext { margin-left: 20px; }
hr { margin: 38px 40px; height: 2px; border: 0; background: #eaeded; }

main { width: 2942px; flex: none; padding: 47px 78px 0; }
.crumbs { height: 48px; display: flex; align-items: center; gap: 27px; letter-spacing: -.4px; color: #687078; margin-left: 1px; padding-bottom: 2px; }
.crumbs a { color: #2a6fb5; }
.crumbs svg { margin: 0 -1px; }
.crumbs span { letter-spacing: -.18px; }
.crumbs .c2 { letter-spacing: -.6px; }
.card { width: 2786px; margin-top: 28px; background: #fff; border-top: 2px solid #eaeded; box-shadow: 0 2px 2px 0 rgba(0,28,36,.5), 1px 1px 2px 0 rgba(0,28,36,.3), -1px 1px 2px 0 rgba(0,28,36,.25); height: 728px; }
.env-head { height: 198px; background: #fafafa; border-bottom: 2px solid #eaeded; display: flex; justify-content: space-between; padding: 35px 41px 0 41px; }
.env-title { font-size: 24px; color: #545b64; }
.env-title h1 { font-size: 36px; line-height: 44px; letter-spacing: -.7px; color: #16191f; }
.env-title p { height: 39px; display: flex; align-items: center; letter-spacing: -.35px; white-space: nowrap; }
.env-title h1 + p { margin-top: 5px; }
.env-title a { color: #2a6fb5; font-weight: 700; letter-spacing: -.29px; }
.env-title p svg { color: #2a6fb5; margin: 0 7px 0 9px; }
.env-title p span { letter-spacing: -.2px; }
.env-title .appname { letter-spacing: -.42px; margin-right: 7px; }
.actions { display: flex; gap: 40px; margin-top: 2px; }
.btn { height: 60px; border: 2px solid #545b64; border-radius: 4px; background: #fff; color: #545b64; font: 700 28px/36px "Noto Sans", sans-serif; letter-spacing: -.25px; padding: 0 0 2px 2px; display: flex; align-items: center; justify-content: center; white-space: nowrap; }
.refresh { width: 244px; gap: 9px; } .acts { width: 202px; gap: 22px; }
.off { border-color: #d5dbdb; color: #aab7b8; }
.w-causas { width: 178px; } .w-deploy { width: 426px; } .w-alterar { width: 179px; } .w-all { width: 274px; }
.overview { display: grid; grid-template-columns: repeat(3, 924.5px); padding: 38px 6px 0; text-align: center; }
.col { display: flex; flex-direction: column; align-items: center; }
.col h3 { font-size: 28px; line-height: 44px; letter-spacing: -.12px; }
.col h3.plat { letter-spacing: 0; }
.ok { margin-top: 45px; }
.oktext { line-height: 40px; margin: 39px 0 20px; }
.version { margin: 27px 0 20px; line-height: 40px; letter-spacing: .37px; }
.platform { margin: 99px 0 21px; line-height: 39px; letter-spacing: -.43px; }
.node { margin-top: 87px; }
.t-node { font: 900 49px "Inter", sans-serif; fill: #46483e; }
.t-js { font: 700 17px "Inter", sans-serif; fill: #a5d36c; }

.events { height: 702px; margin-top: 42px; }
.ev-head { height: 203px; background: #fafafa; border-bottom: 2px solid #eaeded; display: flex; justify-content: space-between; padding: 36px 41px 0 41px; }
.ev-head h2 { font-size: 36px; line-height: 44px; letter-spacing: -1.5px; }
.ev-tools { display: flex; flex-direction: column; align-items: flex-end; padding-top: 2px; }
.pager { display: flex; align-items: center; gap: 42px; margin-top: 20px; height: 40px; }
.pager .prev { transform: scaleX(-1); }
.pager b { line-height: 40px; }
.row { height: 80px; border-bottom: 2px solid #eaeded; display: grid; grid-template-columns: 510px 150px 1fr; align-items: center; padding: 0 0 1px 42px; white-space: nowrap; }
.row:last-child { border-color: transparent; }
.row time { letter-spacing: .32px; }
.row i { color: #5f8727; letter-spacing: -.7px; }
.row span { letter-spacing: -.44px; }
.row .short { letter-spacing: -.52px; }
.th { height: 98px; background: #fafafa; color: #545b64; grid-template-columns: 512px 151px 1fr; letter-spacing: -.8px; }
.th b { height: 48px; line-height: 46px; }
.th b + b { box-shadow: -40px 0 0 0 #fafafa, -42px 0 0 0 #eaeded; }
.infobar { flex: 1; background: #fff; box-shadow: -1px 0 2px rgba(0,28,36,.35); display: flex; justify-content: center; align-items: flex-start; padding-top: 24px; }

.awsfoot { height: 64px; flex: none; background: linear-gradient(90deg, #262f3e, #232c38 25%, #232c38 65%, #262f3e); border-top: 2px solid #555e6a; display: flex; align-items: center; color: #fff; font-size: 24px; padding: 0 41px 2px 39px; letter-spacing: -.32px; white-space: nowrap; }
.copy { margin-left: auto; width: 608px; } .priv { width: 129px; } .terms { width: 115px; } .cookie { padding-top: 4px; width: 206px; letter-spacing: -.5px; }

/* dock */
.dock { margin: 3px 0 0 827px; width: 1930px; height: 160px; border-radius: 46px; border: 2px solid #3a4149; background: linear-gradient(#11171f, #12202b); display: flex; padding-left: 3px; }
.app { width: 138px; height: 156px; padding-bottom: 10px; display: flex; align-items: center; justify-content: center; position: relative; flex: none; }
.run::after { content: ""; position: absolute; left: 64px; bottom: 4px; width: 8px; height: 8px; border-radius: 50%; background: #96a0ad; }
.dsep { width: 2px; height: 120px; margin: 18px 30px 0 32px; background: #4c545d; flex: none; }
.dsep ~ .dsep { margin: 18px 30px 0 30px; }
.badge { position: absolute; right: 3px; top: 8px; width: 48px; height: 48px; border-radius: 50%; background: #e9503f; color: #fff; font: 28px/48px "Inter", sans-serif; text-align: center; }
.t-ide { font: 700 37px "Inter", sans-serif; fill: #fff; letter-spacing: -.5px; }
.t-teams { font: 700 30px "Inter", sans-serif; fill: #fff; }
.t-term { font: 700 24px "Liberation Mono", monospace; fill: #fff; }
```
